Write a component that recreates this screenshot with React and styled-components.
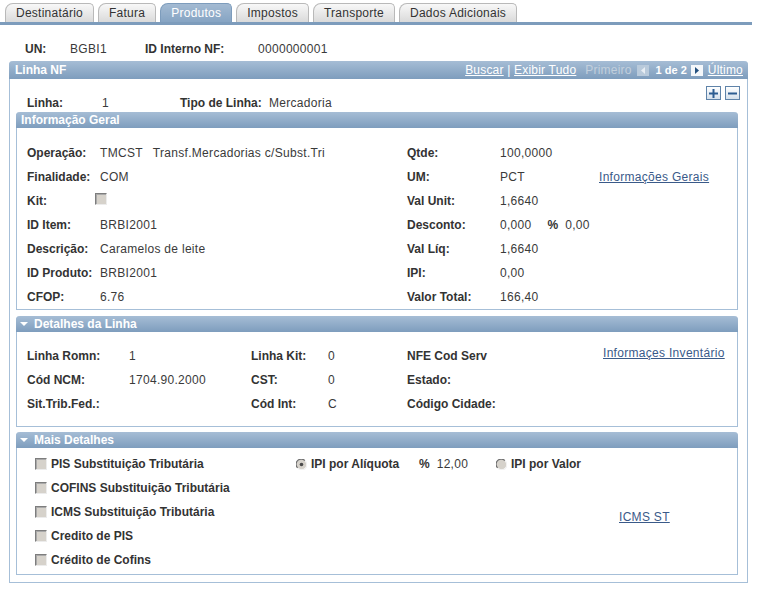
import React from "react";
import styled, { createGlobalStyle } from "styled-components";

const GlobalStyle = createGlobalStyle`
  body {
    margin: 0;
    background: #fff;
    font-family: Arial, "Liberation Sans", sans-serif;
    font-size: 12px;
    color: #333;
  }
`;

const Page = styled.div`
  width: 760px;
  height: 591px;
  overflow: hidden;
`;

const TabBar = styled.div`
  display: flex;
  gap: 4px;
  padding: 3px 0 0 5px;
  margin-right: 8px;
  border-bottom: 3px solid #7d9cbc;
`;

const Tab = styled.div`
  height: 19px;
  line-height: 18px;
  box-sizing: border-box;
  padding: 0 10px 0 10px;
  letter-spacing: 0.25px;
  border: 1px solid ${(p) => (p.$active ? "#7d9cbc" : "#b9b9b9")};
  border-bottom: none;
  border-radius: 8px 5px 0 0;
  background: ${(p) =>
    p.$active
      ? "linear-gradient(#a3bad2, #86a4c3)"
      : "linear-gradient(#f8f8f8, #dadada)"};
  color: ${(p) => (p.$active ? "#fff" : "#333")};
`;

const KeyRow = styled.div`
  display: grid;
  grid-template-columns: 45px 75px 113px auto;
  line-height: 14px;
  margin-top: 17px;
  padding-left: 25px;
`;

const Label = styled.span`
  font-weight: bold;
  color: #333;
  white-space: nowrap;
  margin-left: ${(p) => p.$shift || 0}px;
`;

const Value = styled.span`
  color: #3a3a3a;
  white-space: nowrap;
  letter-spacing: 0.3px;
  margin-left: ${(p) => p.$shift || 0}px;
`;

const Box = styled.div`
  margin: 5px 12px 0 9px;
  border: 1px solid #a6bfd8;
  border-top: none;
  border-radius: 4px 4px 0 0;
  padding-bottom: 7px;
`;

const BoxHeader = styled.div`
  height: 18px;
  margin: 0 -1px;
  display: flex;
  align-items: center;
  justify-content: space-between;
  padding: 0 5px 0 6px;
  border-radius: 4px 4px 0 0;
  background: linear-gradient(#a6bdd5, #7e9dbd);
  color: #fff;
`;

const HeaderTitle = styled.span`
  font-weight: bold;
`;

const Nav = styled.div`
  display: flex;
  align-items: center;
  white-space: pre;
  letter-spacing: 0.2px;
`;

const NavLink = styled.a`
  color: #fff;
  text-decoration: underline;
  margin-left: ${(p) => p.$gap || 0}px;
`;

const NavMuted = styled.span`
  color: #c2cfdc;
  margin-left: ${(p) => p.$gap || 0}px;
`;

const NavCount = styled.span`
  font-size: 11px;
  font-weight: bold;
  letter-spacing: 0;
  color: #fff;
  margin-left: ${(p) => p.$gap || 0}px;
`;

const ArrowIcon = styled.svg`
  display: block;
  margin-left: ${(p) => p.$gap || 0}px;
`;

const Toolbar = styled.div`
  display: flex;
  justify-content: flex-end;
  gap: 4px;
  margin: 7px 7px 0 0;
  height: 13px;
`;

const SquareBtn = styled.div`
  width: 15px;
  height: 14px;
  box-sizing: border-box;
  border: 1px solid #5f83a9;
  background: linear-gradient(#ffffff, #d5e0ec);
  display: flex;
  align-items: center;
  justify-content: center;
`;

const LinhaRow = styled.div`
  display: grid;
  grid-template-columns: 75px 78px 89px auto;
  line-height: 14px;
  margin-top: -3px;
  padding-left: 17px;
`;

const Section = styled.div`
  margin: ${(p) => p.$top}px 9px 0 6px;
  border: 1px solid #a6bfd8;
  border-top: none;
  border-radius: 4px 4px 0 0;
`;

const SectionHeader = styled.div`
  height: 16px;
  margin: 0 -1px;
  display: flex;
  align-items: center;
  gap: 6px;
  padding-left: ${(p) => (p.$collapsible ? 4 : 5)}px;
  border-radius: 4px 4px 0 0;
  background: linear-gradient(#a6bdd5, #7e9dbd);
  color: #fff;
  font-weight: bold;
`;

const FieldGrid = styled.div`
  display: grid;
  grid-template-columns: ${(p) => p.$cols};
  grid-auto-rows: 24px;
  align-items: center;
  padding: ${(p) => p.$pad};
`;

const Cell = styled.div`
  display: flex;
  align-items: center;
  gap: ${(p) => p.$gap || 0}px;
  white-space: nowrap;
  grid-column: ${(p) => p.$col || "auto"};
  grid-row: ${(p) => p.$row || "auto"};
`;

const Link = styled.a`
  color: #3a5a89;
  text-decoration: underline;
  white-space: nowrap;
  letter-spacing: 0.3px;
  margin-top: ${(p) => p.$dy || 0}px;
`;

const Check = styled.span`
  display: inline-block;
  width: 12px;
  height: 12px;
  box-sizing: border-box;
  border: 1px solid;
  border-color: #7d7d7d #ececec #ececec #7d7d7d;
  box-shadow: inset 1px 1px 0 #a9a9a9;
  background: #d6d2cb;
  margin-left: ${(p) => p.$shift || 0}px;
  margin-top: ${(p) => p.$dy || 0}px;
`;

const BoldLabel = styled.span`
  font-weight: bold;
  color: #333;
`;

function Radio({ checked }) {
  return (
    <svg width="11" height="11" viewBox="0 0 11 11">
      <circle cx="5.5" cy="5.5" r="5" fill="#d6d2cb" />
      <path d="M1.6 8.9 A5 5 0 0 1 8.9 1.6" fill="none" stroke="#6e6e6e" strokeWidth="1.2" />
      <path d="M9.4 2.1 A5 5 0 0 1 2.1 9.4" fill="none" stroke="#f2f2f2" strokeWidth="1.2" />
      {checked && <circle cx="5.5" cy="5.5" r="1.8" fill="#4a4a4a" />}
    </svg>
  );
}

function Caret() {
  return (
    <svg width="8" height="6" viewBox="0 0 8 6">
      <path d="M0 1 L8 1 L4 5 Z" fill="#fff" />
    </svg>
  );
}

const info = [
  ["Operação:", "TMCST", "Qtde:", "100,0000"],
  ["Finalidade:", "COM", "UM:", "PCT"],
  ["Kit:", null, "Val Unit:", "1,6640"],
  ["ID Item:", "BRBI2001", "Desconto:", "0,000"],
  ["Descrição:", "Caramelos de leite", "Val Líq:", "1,6640"],
  ["ID Produto:", "BRBI2001", "IPI:", "0,00"],
  ["CFOP:", "6.76", "Valor Total:", "166,40"],
];

const detalhes = [
  ["Linha Romn:", "1", "Linha Kit:", "0", "NFE Cod Serv"],
  ["Cód NCM:", "1704.90.2000", "CST:", "0", "Estado:"],
  ["Sit.Trib.Fed.:", "", "Cód Int:", "C", "Código Cidade:"],
];

const checks = [
  "PIS Substituição Tributária",
  "COFINS Substituição Tributária",
  "ICMS Substituição Tributária",
  "Credito de PIS",
  "Crédito de Cofins",
];

export default function App() {
  return (
    <Page>
      <GlobalStyle />
      <TabBar>
        {["Destinatário", "Fatura", "Produtos", "Impostos", "Transporte", "Dados Adicionais"].map((t) => (
          <Tab key={t} $active={t === "Produtos"}>
            {t}
          </Tab>
        ))}
      </TabBar>

      <KeyRow>
        <Label>UN:</Label>
        <Value>BGBI1</Value>
        <Label>ID Interno NF:</Label>
        <Value>0000000001</Value>
      </KeyRow>

      <Box>
        <BoxHeader>
          <HeaderTitle>Linha NF</HeaderTitle>
          <Nav>
            <NavLink>Buscar</NavLink> | <NavLink>Exibir Tudo</NavLink>
            <NavMuted $gap={9}>Primeiro</NavMuted>
            <ArrowIcon $gap={5} width="12" height="11" viewBox="0 0 12 11">
              <rect width="12" height="11" fill="#b9cadb" />
              <path d="M8 2 L8 9 L4 5.5 Z" fill="#e8eef4" />
            </ArrowIcon>
            <NavCount $gap={7}>1 de 2</NavCount>
            <ArrowIcon $gap={4} width="12" height="11" viewBox="0 0 12 11">
              <rect width="12" height="11" fill="#f4f7fa" />
              <path d="M4 2 L4 9 L8 5.5 Z" fill="#23507f" />
            </ArrowIcon>
            <NavLink $gap={5}>Último</NavLink>
          </Nav>
        </BoxHeader>

        <Toolbar>
          <SquareBtn>
            <svg width="9" height="9" viewBox="0 0 9 9">
              <rect x="0" y="3.5" width="9" height="2" fill="#2d5d91" />
              <rect x="3.5" y="0" width="2" height="9" fill="#2d5d91" />
            </svg>
          </SquareBtn>
          <SquareBtn>
            <svg width="9" height="9" viewBox="0 0 9 9">
              <rect x="0" y="3.5" width="9" height="2" fill="#2d5d91" />
            </svg>
          </SquareBtn>
        </Toolbar>

        <LinhaRow>
          <Label>Linha:</Label>
          <Value>1</Value>
          <Label>Tipo de Linha:</Label>
          <Value>Mercadoria</Value>
        </LinhaRow>

        <Section $top={2}>
          <SectionHeader>Informação Geral</SectionHeader>
          <FieldGrid $cols="73px 307px 93px 99px auto" $pad="13px 0 0 10px">
            {info.map(([l1, v1, l2, v2], i) => (
              <React.Fragment key={l1}>
                <Cell>
                  <Label>{l1}</Label>
                </Cell>
                <Cell>
                  {i === 0 ? (
                    <>
                      <Value>TMCST</Value>
                      <Value $shift={10}>Transf.Mercadorias c/Subst.Tri</Value>
                    </>
                  ) : i === 2 ? (
                    <Check $shift={-5} $dy={-4} />
                  ) : (
                    <Value>{v1}</Value>
                  )}
                </Cell>
                <Cell>
                  <Label>{l2}</Label>
                </Cell>
                <Cell>
                  <Value>{v2}</Value>
                  {i === 3 && (
                    <>
                      <Label $shift={16}>%</Label>
                      <Value $shift={7}>0,00</Value>
                    </>
                  )}
                </Cell>
                <Cell>{i === 1 && <Link>Informações Gerais</Link>}</Cell>
              </React.Fragment>
            ))}
          </FieldGrid>
        </Section>

        <Section $top={6}>
          <SectionHeader $collapsible>
            <Caret />
            Detalhes da Linha
          </SectionHeader>
          <FieldGrid $cols="102px 122px 77px 79px 196px auto" $pad="12px 0 10px 10px">
            {detalhes.map(([l1, v1, l2, v2, l3], i) => (
              <React.Fragment key={l1}>
                <Cell>
                  <Label>{l1}</Label>
                </Cell>
                <Cell>
                  <Value>{v1}</Value>
                </Cell>
                <Cell>
                  <Label>{l2}</Label>
                </Cell>
                <Cell>
                  <Value>{v2}</Value>
                </Cell>
                <Cell>
                  <Label>{l3}</Label>
                </Cell>
                <Cell>{i === 0 && <Link $dy={-6}>Informaçes Inventário</Link>}</Cell>
              </React.Fragment>
            ))}
          </FieldGrid>
        </Section>

        <Section $top={5}>
          <SectionHeader $collapsible>
            <Caret />
            Mais Detalhes
          </SectionHeader>
          <FieldGrid $cols="261px 123px 77px 123px auto" $pad="4px 0 2px 18px">
            {checks.map((c, i) => (
              <Cell key={c} $gap={4} $col="1" $row={i + 1}>
                <Check />
                <BoldLabel>{c}</BoldLabel>
              </Cell>
            ))}
            <Cell $gap={4} $col="2" $row="1">
              <Radio checked />
              <BoldLabel>IPI por Alíquota</BoldLabel>
            </Cell>
            <Cell $col="3" $row="1">
              <BoldLabel>%</BoldLabel>
              <Value $shift={7}>12,00</Value>
            </Cell>
            <Cell $gap={4} $col="4" $row="1">
              <Radio />
              <BoldLabel>IPI por Valor</BoldLabel>
            </Cell>
            <Cell $col="5" $row="3">
              <Link $dy={10}>ICMS ST</Link>
            </Cell>
          </FieldGrid>
        </Section>
      </Box>
    </Page>
  );
}
